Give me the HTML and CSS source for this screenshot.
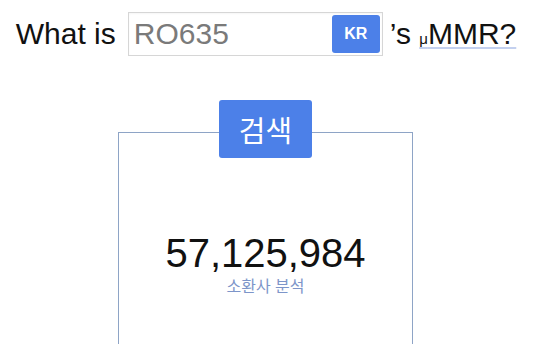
FILE: index.html
```html
<!DOCTYPE html>
<html lang="ko">
<head>
    <meta charset="UTF-8">
    <meta name="viewport" content="width=device-width, initial-scale=1.0">
    <title>μMMR</title>
    <link rel="stylesheet" href="styles.css">
</head>
<body>
    <div class="page">
        <!-- 질문 줄 -->
        <form class="query">
            <span class="lead">What is</span>
            <div class="summoner">
                <span class="name">RO635</span>
                <button type="button" class="region">KR</button>
            </div>
            <span class="tail">’s <abbr class="mmr" title="micro MMR"><small>μ</small>MMR?</abbr></span>
        </form>

        <!-- 결과 -->
        <div class="result">
            <button type="submit" class="search">검색</button>
            <div class="score">57,125,984</div>
            <div class="caption">소환사 분석</div>
        </div>
    </div>
</body>
</html>
```

FILE: styles.css
```css
body {
    font-family: "Liberation Sans", Arial, sans-serif;
    margin: 0;
    padding: 0;
    background-color: #fff;
    color: #111;
}
.page {
    width: 532px;
    height: 344px;
    overflow: hidden;
}
.query {
    display: flex;
    align-items: center;
    justify-content: center;
    margin: 12px 0 0;
    font-size: 30px;
    height: 44px;
}
.lead {
    margin-right: 12px;
}
.summoner {
    display: flex;
    align-items: center;
    justify-content: space-between;
    width: 246px;
    height: 42px;
    border: 1px solid #d6d6d6;
    box-shadow: inset 0 1px 2px rgba(0, 0, 0, 0.04);
    padding: 0 2px 0 5px;
}
.name {
    color: #7a7a7a;
}
.region {
    width: 48px;
    height: 38px;
    border: none;
    border-radius: 3px;
    background-color: #4c80e8;
    color: #fff;
    font-family: "Liberation Sans", Arial, sans-serif;
    font-weight: bold;
    font-size: 16px;
    padding: 0;
}
.tail {
    margin-left: 7px;
}
.mmr {
    text-decoration: underline;
    text-decoration-color: #c3d0ef;
    text-decoration-thickness: 2px;
    text-underline-offset: 3px;
}
.mmr small {
    font-size: 15px;
}
.result {
    display: flex;
    flex-direction: column;
    align-items: center;
    width: 293px;
    height: 240px;
    margin: 76px 0 0 118px;
    border: 1px solid #8ea4c6;
    border-bottom: none;
}
.search {
    width: 93px;
    height: 58px;
    margin-top: -33px;
    border: none;
    border-radius: 3px;
    background-color: #4c80e8;
    color: #fff;
    font-family: "Noto Sans CJK KR", sans-serif;
    font-size: 29px;
    padding: 0;
}
.score {
    margin-top: 73px;
    font-size: 40px;
    line-height: 44px;
    color: #111;
}
.caption {
    font-family: "Noto Sans CJK KR", sans-serif;
    font-size: 16px;
    line-height: 18px;
    color: #7d95c9;
    margin-top: 1px;
}
```
